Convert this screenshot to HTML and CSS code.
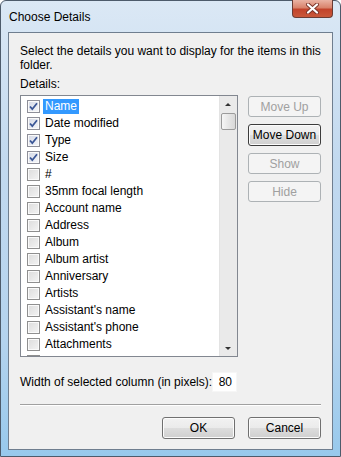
FILE: index.html
```html
<!DOCTYPE html>
<html lang="en">

<head>
  <meta charset="UTF-8">
  <title>Choose Details</title>
  <link rel="stylesheet" href="styles.css">
</head>

<body>
  <div class="window">
    <div class="titlebar">
      <span class="title">Choose Details</span>
      <div class="close-btn">
        <svg width="17" height="11" viewBox="0 0 17 11">
          <path d="M4 1.5 L13 9.5 M13 1.5 L4 9.5" stroke="#7a3328" stroke-width="4" stroke-linecap="round" />
          <path d="M4 1.5 L13 9.5 M13 1.5 L4 9.5" stroke="#fff" stroke-width="2.2" stroke-linecap="round" />
        </svg>
      </div>
    </div>

    <div class="panel">
      <p class="intro">Select the details you want to display for the items in this<br>folder.</p>
      <div class="label">Details:</div>

      <div class="main-row">
        <div class="listbox">
          <div class="items">
            <div class="item"><span class="box checked"><svg width="11" height="11" viewBox="0 0 11 11"><path d="M2 5.5 L4.3 8.2 L9 2.3" fill="none" stroke="#3a5696" stroke-width="1.8" /></svg></span><span class="text selected">Name</span></div>
            <div class="item"><span class="box checked"><svg width="11" height="11" viewBox="0 0 11 11"><path d="M2 5.5 L4.3 8.2 L9 2.3" fill="none" stroke="#3a5696" stroke-width="1.8" /></svg></span><span class="text">Date modified</span></div>
            <div class="item"><span class="box checked"><svg width="11" height="11" viewBox="0 0 11 11"><path d="M2 5.5 L4.3 8.2 L9 2.3" fill="none" stroke="#3a5696" stroke-width="1.8" /></svg></span><span class="text">Type</span></div>
            <div class="item"><span class="box checked"><svg width="11" height="11" viewBox="0 0 11 11"><path d="M2 5.5 L4.3 8.2 L9 2.3" fill="none" stroke="#3a5696" stroke-width="1.8" /></svg></span><span class="text">Size</span></div>
            <div class="item"><span class="box"></span><span class="text">#</span></div>
            <div class="item"><span class="box"></span><span class="text">35mm focal length</span></div>
            <div class="item"><span class="box"></span><span class="text">Account name</span></div>
            <div class="item"><span class="box"></span><span class="text">Address</span></div>
            <div class="item"><span class="box"></span><span class="text">Album</span></div>
            <div class="item"><span class="box"></span><span class="text">Album artist</span></div>
            <div class="item"><span class="box"></span><span class="text">Anniversary</span></div>
            <div class="item"><span class="box"></span><span class="text">Artists</span></div>
            <div class="item"><span class="box"></span><span class="text">Assistant's name</span></div>
            <div class="item"><span class="box"></span><span class="text">Assistant's phone</span></div>
            <div class="item"><span class="box"></span><span class="text">Attachments</span></div>
            <div class="item"><span class="box"></span></div>
          </div>
          <div class="scrollbar">
            <div class="arrow up"></div>
            <div class="thumb"></div>
            <div class="track"></div>
            <div class="arrow down"></div>
          </div>
        </div>

        <div class="side-buttons">
          <button class="btn" disabled>Move Up</button>
          <button class="btn default">Move Down</button>
          <button class="btn" disabled>Show</button>
          <button class="btn" disabled>Hide</button>
        </div>
      </div>

      <div class="width-row">
        <span>Width of selected column (in pixels):</span>
        <div class="num-input">80</div>
      </div>

      <div class="separator"></div>

      <div class="footer">
        <button class="btn">OK</button>
        <button class="btn">Cancel</button>
      </div>
    </div>
  </div>
</body>

</html>
```

FILE: styles.css
```css
body {
  margin: 0;
  font-family: "Liberation Sans", Arial, sans-serif;
  font-size: 12px;
  color: #000;
  background: #fff;
}

.window {
  width: 341px;
  height: 457px;
  box-sizing: border-box;
  border: 1px solid #4d5b6b;
  border-radius: 6px 6px 0 0;
  background: linear-gradient(180deg, #dbe8f5 0%, #c2d9ef 35%, #b4d3ee 75%, #98c9ec 100%);
  display: flex;
  flex-direction: column;
}

.titlebar {
  height: 31px;
  display: flex;
  justify-content: space-between;
  align-items: flex-start;
  padding: 0 7px 0 8px;
}

.title {
  margin-top: 9px;
  font-size: 12px;
}

.close-btn {
  width: 41px;
  height: 18px;
  margin-top: -1px;
  box-sizing: border-box;
  border: 1px solid #6b3b33;
  border-top: none;
  border-radius: 0 0 4px 4px;
  background: linear-gradient(180deg, #eab3a4 0%, #d9836c 45%, #c2432b 55%, #c9583a 100%);
  display: flex;
  align-items: center;
  justify-content: center;
}

.panel {
  flex: 1;
  margin: 0 7px 6px 7px;
  border: 1px solid #6f7e8f;
  background: #f0f0f0;
  padding: 11px 11px 0 11px;
  display: flex;
  flex-direction: column;
}

.intro {
  margin: 0;
  white-space: nowrap;
  line-height: 14px;
}

.label {
  margin-top: 5px;
  line-height: 14px;
}

.main-row {
  margin-top: 4px;
  display: flex;
  justify-content: space-between;
}

.listbox {
  width: 218px;
  height: 262px;
  box-sizing: border-box;
  border: 1px solid #828790;
  background: #fff;
  display: flex;
}

.items {
  flex: 1;
  overflow: hidden;
  padding-top: 2px;
}

.item {
  height: 17px;
  display: flex;
  align-items: center;
  padding-left: 6px;
}

.box {
  width: 13px;
  height: 13px;
  flex-shrink: 0;
  box-sizing: border-box;
  border: 1px solid #8f8f8f;
  background: linear-gradient(135deg, #dcdcdc 0%, #f4f4f4 100%);
  box-shadow: inset 0 0 0 1px #fafafa;
  display: flex;
  align-items: center;
  justify-content: center;
  margin-right: 3px;
}

.box.checked {
  border-color: #8e8f99;
  background: linear-gradient(135deg, #d3d8e6 0%, #f6f7fa 100%);
}

.text {
  padding: 1px 2px;
  line-height: 13px;
}

.text.selected {
  background: #3399ff;
  color: #fff;
}

.scrollbar {
  width: 17px;
  background: #eaeaea;
  border-left: 1px solid #e3e3e3;
  display: flex;
  flex-direction: column;
}

.arrow {
  height: 17px;
  position: relative;
}

.arrow::after {
  content: "";
  position: absolute;
  left: 5px;
  border-left: 3px solid transparent;
  border-right: 3px solid transparent;
}

.arrow.up::after {
  top: 7px;
  border-bottom: 3px solid #333;
}

.arrow.down::after {
  top: 8px;
  border-top: 3px solid #333;
}

.thumb {
  height: 17px;
  margin: 0 1px;
  box-sizing: border-box;
  border: 1px solid #9b9b9b;
  border-radius: 2px;
  background: linear-gradient(90deg, #f6f6f6 0%, #e6e6e6 50%, #d8d8d8 100%);
}

.track {
  flex: 1;
}

.side-buttons {
  display: flex;
  flex-direction: column;
  gap: 7px;
  margin-top: 1px;
}

.btn {
  width: 73px;
  height: 21px;
  padding: 0;
  font-family: inherit;
  font-size: 12px;
  color: #000;
  border: 1px solid #707070;
  border-radius: 3px;
  background: linear-gradient(180deg, #f2f2f2 0%, #ebebeb 48%, #dddddd 52%, #cfcfcf 100%);
  box-shadow: inset 0 0 0 1px #fcfcfc;
}

.btn.default {
  border-color: #3c3c3c;
  height: 22px;
}

.btn:disabled {
  color: #a0a0a0;
  border-color: #adb2b5;
  background: #f4f4f4;
  box-shadow: none;
}

.width-row {
  width: 217px;
  margin-top: 15px;
  display: flex;
  align-items: center;
  justify-content: space-between;
  white-space: nowrap;
}

.num-input {
  width: 30px;
  height: 20px;
  box-sizing: border-box;
  background: #fff;
  border: 1px solid #f6f6f6;
  text-align: right;
  padding-right: 4px;
  line-height: 18px;
}

.separator {
  margin-top: 12px;
  height: 1px;
  background: #a0a0a0;
  border-bottom: 1px solid #fff;
}

.footer {
  margin-top: 11px;
  display: flex;
  justify-content: flex-end;
  gap: 13px;
}

.footer .btn {
  height: 22px;
}
```
